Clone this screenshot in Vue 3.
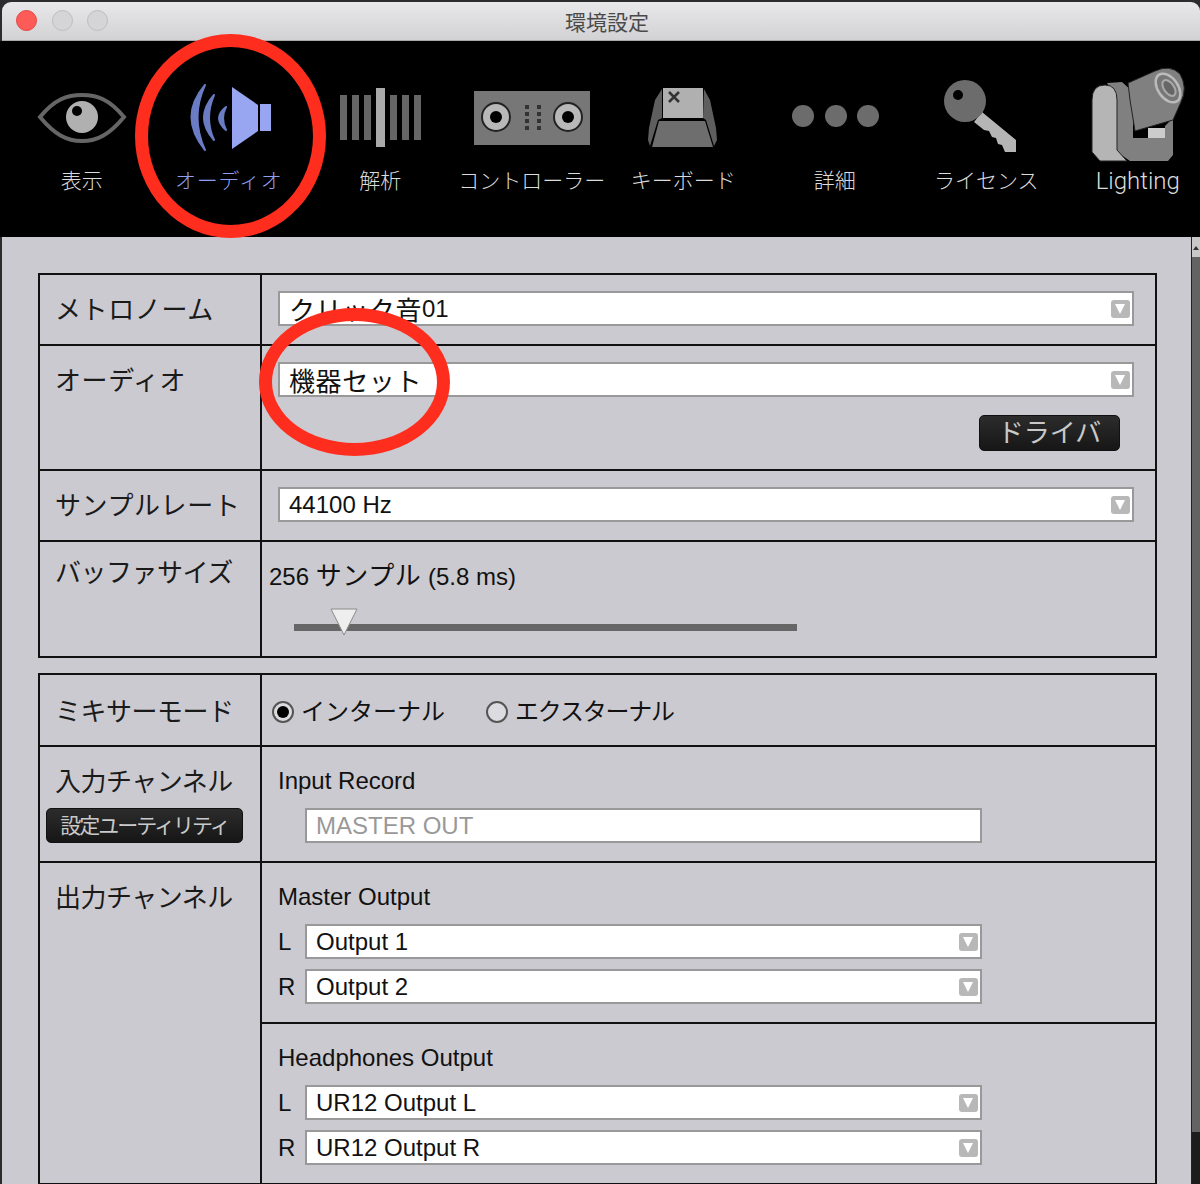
<script setup>
const tools = [
  { id: 'eye', label: '表示' },
  { id: 'audio', label: 'オーディオ' },
  { id: 'bars', label: '解析' },
  { id: 'controller', label: 'コントローラー' },
  { id: 'keyboard', label: 'キーボード' },
  { id: 'dots', label: '詳細' },
  { id: 'key', label: 'ライセンス' },
  { id: 'lighting', label: 'Lighting' }
]

// icons are drawn in page coordinates, the viewBox cuts out each one
const centers = { eye: 82, audio: 229, bars: 380, controller: 532, keyboard: 683, dots: 835, key: 987, lighting: 1138 }
const box = id => `${centers[id] - 65} 65 130 104`

const outputs = [
  { title: 'Master Output', left: 'Output 1', right: 'Output 2' },
  { title: 'Headphones Output', left: 'UR12 Output L', right: 'UR12 Output R' }
]
</script>

<template>
  <div class="window">
    <div class="titlebar">
      <div class="lights">
        <span class="light red"></span>
        <span class="light"></span>
        <span class="light"></span>
      </div>
      <span class="title">環境設定</span>
    </div>

    <div class="toolbar">
      <div v-for="t in tools" :key="t.id" class="tool" :class="t.id">
        <svg class="icon" width="130" height="104" :viewBox="box(t.id)">
          <g v-if="t.id === 'eye'">
            <path d="M40 117C55 99 67 95 82 95C97 95 109 99 124 117C109 135 97 141 82 141C67 141 55 135 40 117Z" fill="none" stroke="#666" stroke-width="4" />
            <circle cx="82" cy="117" r="16" fill="#b0b0b0" />
            <circle cx="77" cy="111" r="5" fill="#000" />
          </g>
          <g v-else-if="t.id === 'audio'">
            <g fill="#6a7cc4" stroke="#6a7cc4" stroke-width="2" stroke-linejoin="round">
              <path d="M205 85Q178 117 205 150Q190 117 205 85Z" />
              <path d="M214 95Q194 118 214 140Q204 118 214 95Z" />
              <path d="M226 107Q212 118 226 130Q220 118 226 107Z" />
            </g>
            <path d="M232 87L258 105V131L232 149Z" fill="#98a6f2" />
            <rect x="260" y="104" width="11" height="27" fill="#98a6f2" />
          </g>
          <g v-else-if="t.id === 'bars'" fill="#666">
            <rect x="340" y="95" width="7" height="45" />
            <rect x="352" y="95" width="7" height="45" />
            <rect x="364" y="95" width="7" height="45" />
            <rect x="376" y="88" width="9" height="59" fill="#aaa" />
            <rect x="390" y="95" width="7" height="45" />
            <rect x="402" y="95" width="7" height="45" />
            <rect x="414" y="95" width="7" height="45" />
          </g>
          <g v-else-if="t.id === 'controller'">
            <rect x="474" y="91" width="116" height="54" fill="#777" />
            <g fill="#b8b8b8" stroke="#222" stroke-width="2">
              <circle cx="496" cy="117" r="14" />
              <circle cx="568" cy="117" r="14" />
            </g>
            <circle cx="496" cy="117" r="6" fill="#000" />
            <circle cx="568" cy="117" r="6" fill="#000" />
            <g fill="#333">
              <rect x="525" y="105" width="4" height="4" />
              <rect x="537" y="105" width="4" height="4" />
              <rect x="525" y="112" width="4" height="4" />
              <rect x="537" y="112" width="4" height="4" />
              <rect x="525" y="119" width="4" height="4" />
              <rect x="537" y="119" width="4" height="4" />
              <rect x="525" y="126" width="4" height="4" />
              <rect x="537" y="126" width="4" height="4" />
            </g>
          </g>
          <g v-else-if="t.id === 'keyboard'">
            <rect x="663" y="88" width="40" height="30" fill="#b0b0b0" />
            <path d="M659 121H705L713 147H652Z" fill="#6e6e6e" />
            <path d="M662 89V118L658 120L650 146L648 140L649 128L655 100ZM704 89L710 100L716 128L717 140L714 146L706 120L703 118Z" fill="#5e5e5e" />
            <path d="M669 92L679 102M679 92L669 102" stroke="#333" stroke-width="2.5" />
          </g>
          <g v-else-if="t.id === 'dots'" fill="#6c6c6c">
            <circle cx="803" cy="116" r="11" />
            <circle cx="836" cy="116" r="11" />
            <circle cx="868" cy="116" r="11" />
          </g>
          <g v-else-if="t.id === 'key'">
            <path d="M983 112L1017 140V152H1006L1003 145L999 144L997 138L993 137L990 131L985 130L975 122Z" fill="#b5b5b5" />
            <circle cx="966" cy="101" r="21" fill="#6c6c6c" />
            <circle cx="959" cy="95" r="5" fill="#000" />
          </g>
          <g v-else-if="t.id === 'lighting'">
            <rect x="1148" y="128" width="17" height="10" fill="#ccc" />
            <path d="M1107 83L1122 82L1133 92V138H1165V126L1173 118V155L1168 161H1130L1117 152V100Z" fill="#808080" />
            <path d="M1092 100Q1092 85 1105 85Q1117 85 1117 100V150L1127 161H1100L1092 152Z" fill="#b5b5b5" stroke="#222" stroke-width="1" />
            <path d="M1128 83L1155 71Q1170 64 1180 74Q1188 88 1181 102L1173 120L1135 131L1130 100Z" fill="#808080" stroke="#222" stroke-width="1" />
            <ellipse cx="1168" cy="88" rx="10" ry="16" transform="rotate(-35 1168 88)" fill="#777" stroke="#bbb" stroke-width="2.5" />
            <ellipse cx="1169" cy="88" rx="5" ry="9" transform="rotate(-35 1169 88)" fill="#666" stroke="#aaa" stroke-width="2" />
          </g>
        </svg>
        <span class="tool-label">{{ t.label }}</span>
      </div>
    </div>

    <div class="body">
      <div class="main">
        <div class="panel">
          <div class="row">
            <div class="label loose">メトロノーム</div>
            <div class="cell">
              <div class="select"><span class="ja">クリック音</span>01<i class="arrow"></i></div>
            </div>
          </div>
          <div class="row">
            <div class="label loose">オーディオ</div>
            <div class="cell">
              <div class="select"><span class="ja">機器セット</span><i class="arrow"></i></div>
              <div class="btn-line"><button class="dark-btn driver">ドライバ</button></div>
            </div>
          </div>
          <div class="row">
            <div class="label loose">サンプルレート</div>
            <div class="cell">
              <div class="select">44100 Hz<i class="arrow"></i></div>
            </div>
          </div>
          <div class="row">
            <div class="label up tight">バッファサイズ</div>
            <div class="cell buffer">
              <div class="value">256 <span class="ja">サンプル</span> (5.8 ms)</div>
              <div class="slider">
                <svg class="thumb" width="28" height="28" viewBox="0 0 28 28">
                  <path d="M1 1H27L14 27Z" fill="#eee" stroke="#8a8a8a" stroke-width="1" />
                </svg>
              </div>
            </div>
          </div>
        </div>

        <div class="panel second">
          <div class="row">
            <div class="label tight mixer">ミキサーモード</div>
            <div class="cell modes">
              <label class="mode"><i class="radio on"></i>インターナル</label>
              <label class="mode ext"><i class="radio"></i>エクスターナル</label>
            </div>
          </div>
          <div class="row">
            <div class="label tight">
              入力チャンネル
              <button class="dark-btn utility">設定ユーティリティ</button>
            </div>
            <div class="cell">
              <div class="heading">Input Record</div>
              <div class="select short disabled">MASTER OUT</div>
            </div>
          </div>
          <div class="row">
            <div class="label tight">出力チャンネル</div>
            <div class="stack">
              <div v-for="o in outputs" :key="o.title" class="cell">
                <div class="heading">{{ o.title }}</div>
                <div class="channel">
                  <span class="lr">L</span>
                  <div class="select short">{{ o.left }}<i class="arrow"></i></div>
                </div>
                <div class="channel">
                  <span class="lr">R</span>
                  <div class="select short">{{ o.right }}<i class="arrow"></i></div>
                </div>
              </div>
            </div>
          </div>
        </div>
      </div>

      <div class="scrollbar">
        <div class="scroll-up"></div>
        <div class="scroll-thumb"></div>
        <div class="scroll-rest"></div>
      </div>
    </div>

    <!-- hand drawn red marks over the screenshot -->
    <div class="mark mark-tool"></div>
    <div class="mark mark-device"></div>
  </div>
</template>

<style scoped>
.window {
  position: relative;
  width: 1200px;
  height: 1184px;
  overflow: hidden;
  background: #2c2c2c;
  font-family: "Liberation Sans", "Noto Sans CJK JP", sans-serif;
  color: #111;
}

/* ===== TITLE BAR ===== */
.titlebar {
  display: flex;
  align-items: center;
  justify-content: center;
  height: 38px;
  margin: 2px 0 0 2px;
  padding-left: 12px;
  background: linear-gradient(#e8e7ea, #d2d1d3);
  border-bottom: 1px solid #aaa;
  border-radius: 9px 9px 0 0;
}
.lights {
  position: absolute;
  left: 16px;
  top: 10px;
  display: flex;
  gap: 14.5px;
}
.light {
  width: 21px;
  height: 21px;
  box-sizing: border-box;
  border-radius: 50%;
  background: #d5d4d6;
  border: 1px solid #bdbcbe;
}
.light.red {
  background: #fc5b57;
  border-color: #e5443f;
}
.title {
  font-size: 21px;
  color: #4a4a4a;
}

/* ===== TOOLBAR ===== */
.toolbar {
  display: flex;
  height: 196px;
  padding-left: 6px;
  background: #000;
  overflow: hidden;
}
.tool {
  flex: 0 0 151.5px;
  display: flex;
  flex-direction: column;
  align-items: center;
  padding-top: 24px;
}
.tool.audio {
  margin-left: -4.5px;
}
.icon {
  display: block;
  flex: none;
}
.tool-label {
  font-size: 21px;
  line-height: 24px;
  color: #dcdcdc;
  white-space: nowrap;
  font-weight: 300;
}
.tool.audio .tool-label {
  color: #8f9ff0;
  letter-spacing: 0.8px;
}
.tool.lighting .tool-label {
  font-family: Roboto, sans-serif;
  font-size: 24px;
}

/* ===== BODY ===== */
.body {
  display: flex;
  height: 947px;
  margin-left: 2px;
  background: #cbcad0;
}
.main {
  flex: 1;
  padding: 36px 0 0 36px;
}
.scrollbar {
  flex: 0 0 8px;
  display: flex;
  flex-direction: column;
  border-left: 1px solid #222;
}
.scroll-up {
  position: relative;
  height: 20px;
  background: #c8c8c8;
}
.scroll-up::before {
  content: "";
  position: absolute;
  left: 1px;
  top: 9px;
  border-left: 3px solid transparent;
  border-right: 3px solid transparent;
  border-bottom: 4px solid #333;
}
.scroll-thumb {
  height: 875px;
  background: #636363;
}
.scroll-rest {
  flex: 1;
  background: #1c1c1c;
}

/* ===== PANELS ===== */
.panel {
  width: 1119px;
  box-sizing: border-box;
  border: 2px solid #111;
}
.panel.second {
  margin-top: 15px;
}
.row {
  display: flex;
}
.row + .row {
  border-top: 2px solid #111;
}
.label {
  flex: 0 0 222px;
  box-sizing: border-box;
  padding: 17px 0 0 15px;
  border-right: 2px solid #111;
  font-size: 26px;
  line-height: 36px;
  color: #1a1a1a;
}
.label.up {
  padding-top: 13px;
}
.label.mixer {
  padding-top: 19px;
}
.label.loose {
  letter-spacing: 0.6px;
}
.label.tight {
  letter-spacing: -0.5px;
}
.cell {
  flex: 1;
  padding: 16px 21px 18px 16px;
}
.stack {
  flex: 1;
  display: flex;
  flex-direction: column;
}
.stack .cell + .cell {
  border-top: 2px solid #111;
}
.ja {
  font-size: 26px;
  letter-spacing: 0.6px;
}

/* ===== SELECTS ===== */
.select {
  position: relative;
  box-sizing: border-box;
  height: 35px;
  display: flex;
  align-items: center;
  padding-left: 9px;
  background: #fff;
  border: 2px solid #999;
  font-size: 24px;
  white-space: nowrap;
}
.select.short {
  width: 677px;
}
.select.disabled {
  margin-left: 27px;
  color: #999;
}
.arrow {
  position: absolute;
  right: 2px;
  top: 7px;
  width: 19px;
  height: 18px;
  border-radius: 3px;
  background: #b8b8b8;
}
.arrow::before {
  content: "";
  position: absolute;
  left: 4px;
  top: 4px;
  border-left: 5.5px solid transparent;
  border-right: 5.5px solid transparent;
  border-top: 10px solid #fff;
}
.heading {
  font-size: 24px;
  line-height: 36px;
  margin-bottom: 9px;
}
.channel {
  display: flex;
  align-items: center;
  height: 35px;
  font-size: 24px;
}
.channel + .channel {
  margin-top: 10px;
}
.lr {
  flex: 0 0 27px;
}

/* ===== BUTTONS ===== */
.dark-btn {
  display: block;
  padding: 0;
  border: 1px solid #111;
  border-radius: 5px;
  background: linear-gradient(#2c2c2c, #161616);
  color: #c9c9c9;
  font-family: inherit;
  text-align: center;
}
.btn-line {
  display: flex;
  justify-content: flex-end;
  padding-right: 14px;
  margin-top: 18px;
}
.driver {
  width: 141px;
  height: 36px;
  font-size: 26px;
  line-height: 34px;
}
.utility {
  width: 197px;
  height: 35px;
  margin: 8px 0 0 -9px;
  font-size: 21px;
  line-height: 33px;
  letter-spacing: -2px;
  white-space: nowrap;
}

/* ===== BUFFER ===== */
.buffer {
  padding-left: 7px;
  padding-bottom: 25px;
}
.value {
  height: 36px;
  font-size: 24px;
  line-height: 36px;
}
.slider {
  position: relative;
  width: 503px;
  height: 7px;
  margin: 30px 0 0 25px;
  background: #666;
}
.thumb {
  position: absolute;
  left: 36px;
  top: -16px;
}

/* ===== MODE ===== */
.modes {
  display: flex;
  align-items: center;
  gap: 41px;
  padding-left: 10px;
  padding-top: 19px;
  padding-bottom: 15px;
}
.mode {
  display: flex;
  align-items: center;
  gap: 7px;
  font-size: 24px;
  line-height: 36px;
}
.mode.ext {
  letter-spacing: -1.2px;
}
.radio {
  position: relative;
  box-sizing: border-box;
  width: 22px;
  height: 22px;
  border: 2px solid #555;
  border-radius: 50%;
  background: #dcdce0;
}
.radio.on::before {
  content: "";
  position: absolute;
  left: 3px;
  top: 3px;
  width: 12px;
  height: 12px;
  border-radius: 50%;
  background: #000;
}

/* ===== RED MARKS ===== */
.mark {
  position: absolute;
  box-sizing: border-box;
  border: 13px solid #ff2d1e;
  border-radius: 50%;
}
.mark-tool {
  left: 135px;
  top: 34px;
  width: 191px;
  height: 204px;
}
.mark-device {
  left: 259px;
  top: 308px;
  width: 191px;
  height: 148px;
}
</style>

<style>
html,
body {
  margin: 0;
  background: #2c2c2c;
}
</style>
